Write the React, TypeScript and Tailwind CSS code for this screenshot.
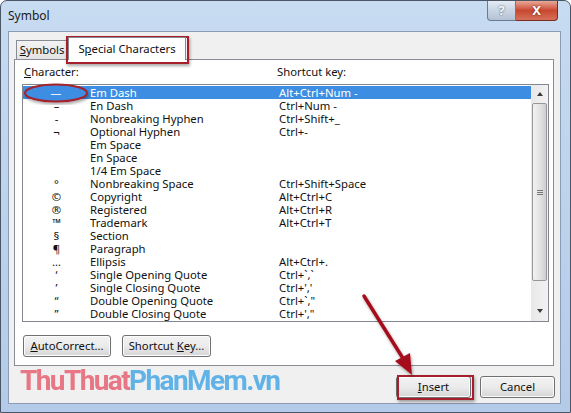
import type { ReactNode } from 'react'

const rows: { ch: string; name: string; key: string }[] = [
  { ch: '—', name: 'Em Dash', key: 'Alt+Ctrl+Num -' },
  { ch: '–', name: 'En Dash', key: 'Ctrl+Num -' },
  { ch: '-', name: 'Nonbreaking Hyphen', key: 'Ctrl+Shift+_' },
  { ch: '¬', name: 'Optional Hyphen', key: 'Ctrl+-' },
  { ch: '', name: 'Em Space', key: '' },
  { ch: '', name: 'En Space', key: '' },
  { ch: '', name: '1/4 Em Space', key: '' },
  { ch: '°', name: 'Nonbreaking Space', key: 'Ctrl+Shift+Space' },
  { ch: '©', name: 'Copyright', key: 'Alt+Ctrl+C' },
  { ch: '®', name: 'Registered', key: 'Alt+Ctrl+R' },
  { ch: '™', name: 'Trademark', key: 'Alt+Ctrl+T' },
  { ch: '§', name: 'Section', key: '' },
  { ch: '¶', name: 'Paragraph', key: '' },
  { ch: '…', name: 'Ellipsis', key: 'Alt+Ctrl+.' },
  { ch: '‘', name: 'Single Opening Quote', key: 'Ctrl+`,`' },
  { ch: '’', name: 'Single Closing Quote', key: "Ctrl+','" },
  { ch: '“', name: 'Double Opening Quote', key: 'Ctrl+`,"' },
  { ch: '”', name: 'Double Closing Quote', key: "Ctrl+'," + '"' },
]

function WinButton({ children, className = '' }: { children: ReactNode; className?: string }) {
  return (
    <button
      type="button"
      className={`h-[22px] rounded-[3px] border border-[#707070] bg-gradient-to-b from-[#f2f2f2] via-[#ebebeb] to-[#d5d5d5] text-[11.3px] text-[#111] shadow-[inset_0_0_0_1px_#fcfcfc] ${className}`}
    >
      {children}
    </button>
  )
}

export default function App() {
  return (
    <div className="relative w-[571px] h-[413px] overflow-hidden bg-white font-['Noto_Sans','Liberation_Sans',sans-serif] text-[11.3px] text-[#111]">
      <div className="flex flex-col w-full h-full rounded-t-[7px] border border-[#4a5566] bg-gradient-to-b from-[#c7dbf1] via-[#bcd3ee] to-[#b3cbe8]">
        {/* title bar */}
        <div className="flex h-[30px] shrink-0 items-start">
          <span className="pl-[7px] pt-[6px] text-[12px] text-[#1a1a1a]">Symbol</span>
          <div className="ml-auto mr-[12px] flex h-[20px]">
            <div className="flex w-[29px] items-center justify-center rounded-bl-[4px] border border-t-0 border-[#6b7a8f] bg-gradient-to-b from-[#e4ebf4] via-[#c9d5e3] to-[#b3c2d4] text-[13px] font-bold text-[#f4f7fb] [text-shadow:0_0_2px_#3d4c60]">
              ?
            </div>
            <div className="flex w-[42px] items-center justify-center rounded-br-[4px] border border-l-0 border-t-0 border-[#7a2b22] bg-gradient-to-b from-[#e8a898] via-[#c9472f] to-[#d6705a] text-[13px] font-bold text-white [text-shadow:0_0_2px_#5a1510]">
              X
            </div>
          </div>
        </div>

        {/* client area */}
        <div className="ml-[7px] mr-[9px] mb-[8px] flex-1 border border-[#8b9cb3] bg-[#f0f0f0] flex flex-col px-[5px]">
          {/* tabs */}
          <div className="mt-[5px] flex h-[22px] items-end pl-[2px]">
            <div className="flex h-[19px] w-[52px] items-center justify-center border border-b-0 border-[#898c95] bg-gradient-to-b from-[#f3f3f3] to-[#e3e3e3]">
              <span><u>S</u>ymbols</span>
            </div>
            <div className="relative z-10 -mb-px flex h-[23px] w-[118px] items-start justify-center border border-b-0 border-[#898c95] bg-white pt-[3px]">
              <span>S<u>p</u>ecial Characters</span>
            </div>
          </div>

          {/* tab panel */}
          <div className="flex h-[307px] w-[540px] flex-col border border-[#898c95] bg-white">
            <div className="flex h-[24px] items-center pl-[9px]">
              <span className="w-[253px]"><u>C</u>haracter:</span>
              <span>Shortcut key:</span>
            </div>
            <div className="ml-[7px] flex h-[238px] w-[527px] border border-[#828790] bg-white">
              <div className="flex-1 pt-px">
                {rows.map((r, i) => (
                  <div
                    key={r.name}
                    className={`flex h-[13px] items-center leading-[13px] ${i === 0 ? 'bg-[#3d8ee2] text-white' : ''}`}
                  >
                    <span className="w-[67px] text-center">{r.ch}</span>
                    <span className="w-[189px]">{r.name}</span>
                    <span>{r.key}</span>
                  </div>
                ))}
              </div>
              {/* scrollbar */}
              <div className="flex w-[17px] flex-col items-center bg-gradient-to-r from-[#e8e8e8] to-[#f2f2f2] pb-[2px]">
                <div className="flex h-[17px] w-full items-center justify-center">
                  <div className="h-0 w-0 border-x-[3.5px] border-b-[4px] border-x-transparent border-b-[#3a3a3a]" />
                </div>
                <div className="mt-px flex h-[178px] w-[15px] items-center justify-center rounded-[2px] border border-[#979797] bg-gradient-to-r from-[#f2f2f2] via-[#e4e4e4] to-[#cfcfcf]">
                  <div className="flex flex-col gap-[1px]">
                    <div className="h-px w-[6px] bg-[#777]" />
                    <div className="h-px w-[6px] bg-[#777]" />
                    <div className="h-px w-[6px] bg-[#777]" />
                  </div>
                </div>
                <div className="mt-auto flex h-[17px] w-full items-center justify-center">
                  <div className="h-0 w-0 border-x-[3.5px] border-t-[4px] border-x-transparent border-t-[#3a3a3a]" />
                </div>
              </div>
            </div>
            <div className="ml-[8px] mt-[13px] flex gap-[11px]">
              <WinButton className="w-[88px]">
                <u>A</u>utoCorrect...
              </WinButton>
              <WinButton className="w-[89px]">
                Shortcut <u>K</u>ey...
              </WinButton>
            </div>
          </div>

          {/* bottom buttons */}
          <div className="mt-[10px] flex justify-end gap-[9px]">
            <WinButton className="w-[75px]">
              <u>I</u>nsert
            </WinButton>
            <WinButton className="w-[75px]">Cancel</WinButton>
          </div>
        </div>
      </div>

      {/* watermark */}
      <div className="pointer-events-none absolute left-[20px] top-[360px] font-['Roboto','Liberation_Sans',sans-serif] text-[28px] font-bold tracking-[-1.6px] opacity-80">
        <span className="text-[#e5596b]">ThuThuat</span>
        <span className="text-[#3ea4e6]">PhanMem.vn</span>
      </div>

      {/* annotation: red box around tab */}
      <div className="pointer-events-none absolute left-[66px] top-[36px] h-[28px] w-[123px] border-2 border-[#a5202b] shadow-[1px_2px_3px_rgba(0,0,0,0.35)]" />
      {/* annotation: red box around Insert */}
      <div className="pointer-events-none absolute left-[397px] top-[375px] h-[25px] w-[77px] border-2 border-[#a5202b] shadow-[1px_2px_3px_rgba(0,0,0,0.35)]" />

      {/* annotation: ellipse + arrow */}
      <svg className="pointer-events-none absolute left-0 top-0" width="571" height="413">
        <defs>
          <filter id="sh" x="-20%" y="-20%" width="140%" height="140%">
            <feDropShadow dx="1" dy="2" stdDeviation="1.5" floodColor="#000" floodOpacity="0.35" />
          </filter>
        </defs>
        <g filter="url(#sh)">
          <ellipse cx="56" cy="93" rx="31" ry="8.5" fill="#3d8ee2" stroke="#a5202b" strokeWidth="2" />
          <text x="56" y="97" textAnchor="middle" fill="#fff" fontSize="11" fontFamily="Noto Sans, sans-serif">
            —
          </text>
        </g>
        <g filter="url(#sh)">
          <line x1="364" y1="296" x2="404" y2="360" stroke="#a5101c" strokeWidth="3.5" strokeLinecap="round" />
          <polygon points="412,375 395,361 410,353" fill="#a5101c" />
        </g>
      </svg>
    </div>
  )
}
